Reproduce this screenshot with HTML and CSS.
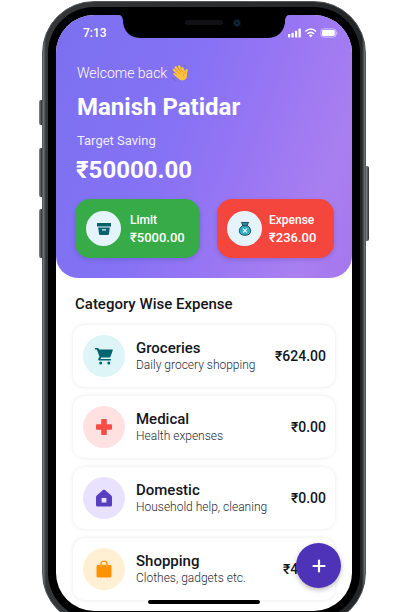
FILE: index.html
```html
<!DOCTYPE html>
<html lang="en">
<head>
<meta charset="utf-8">
<meta name="viewport" content="width=device-width, initial-scale=1">
<title>Expense tracker</title>
<link rel="stylesheet" href="styles.css">
</head>
<body>
<div class="phone">
  <span class="key key-mute"></span>
  <span class="key key-up"></span>
  <span class="key key-down"></span>
  <span class="key key-power"></span>
  <div class="bezel">
  <div class="screen">
    <header class="hero">
      <div class="status">
        <span class="time">7:13</span>
        <svg class="signals" width="50" height="10" viewBox="0 0 50 10" fill="#fff" aria-hidden="true">
          <rect x="0" y="6" width="2.200" height="3.500" rx=".6"/><rect x="3.500" y="4.800" width="2.200" height="4.700" rx=".6"/><rect x="7" y="2.800" width="2.200" height="6.700" rx=".6"/><rect x="10.500" y=".4" width="2.300" height="9.100" rx=".6"/>
          <g fill="none" stroke="#fff" stroke-width="1.500"><path d="M17.300 3.500Q22.700 -1.500 28.100 3.500"/><path d="M19.400 5.800Q22.700 2.900 26 5.800"/></g><path d="M20.800 7.300Q22.700 5.900 24.600 7.300L22.700 9.500Z"/>
          <rect x="32.900" y=".9" width="15" height="8.200" rx="2.600" fill="none" stroke="#fff" stroke-opacity=".7" stroke-width=".8"/><rect x="34" y="2" width="12.800" height="6" rx="1.400"/><path d="M48.700 3.600q1.300 1.400 0 2.800z"/>
        </svg>
      </div>
      <p class="welcome">Welcome back
        <svg width="18" height="18" viewBox="0 0 38 38" aria-hidden="true">
          <g fill="none" stroke="#fbc13d" stroke-linecap="round" stroke-width="5"><path d="M18 23L6 12"/><path d="M20 19L10 7"/><path d="M24 18L17 5"/><path d="M28 19L24 9"/><path d="M30 24L33 13"/></g>
          <path d="M10 17L25 12L33 20Q36 29 29 33Q22 37 16 31L5 22Q4 18 8 19L15 24Z" fill="#fbc13d"/>
          <path d="M10 13l9 8M14 9l8 9M20 9l6 9M31 18q-6 2-5 8" fill="none" stroke="#e08a2e" stroke-width="1.3"/>
          <path d="M2 27q2 6 8 8M26 2q5 1 7 5" fill="none" stroke="#6a67b5" stroke-width="1.5"/>
        </svg>
      </p>
      <h1>Manish Patidar</h1>
      <p class="target">Target Saving</p>
      <p class="saving">₹50000.00</p>
      <div class="totals">
        <section class="total limit">
          <span class="disc"><svg width="16" height="16" viewBox="0 0 16 16" aria-hidden="true"><path d="M1 2h14v3.4H1zM2.2 6.4h11.6l-.8 6.4q-.1 1.2-1.3 1.2H4.3q-1.2 0-1.3-1.2z" fill="#07626c"/><path d="M6 8.8h4" stroke="#e1f5f8" stroke-width="1.3"/></svg></span>
          <div><h2>Limit</h2><p>₹5000.00</p></div>
        </section>
        <section class="total expense">
          <span class="disc"><svg width="14" height="16" viewBox="0 0 16 18" aria-hidden="true"><path d="M3.7 1.5h8.6L11 3.3v2.1H5V3.3z" fill="#278b9d" stroke="#174454"/><path d="M5 5.3Q1.5 7.4 1.5 11q0 5.2 6.5 5.2t6.5-5.2q0-3.6-3.5-5.7z" fill="#35aec4" stroke="#174454"/><path d="M5.8 8.6l4.4 4.4M10.2 8.6L5.8 13" stroke="#e4f7fb" stroke-width="1.3"/></svg></span>
          <div><h2>Expense</h2><p>₹236.00</p></div>
        </section>
      </div>
    </header>
    <main>
      <h2 class="heading">Category Wise Expense</h2>
      <ul class="list">
        <li class="row">
          <span class="icon teal"><svg width="20" height="20" viewBox="0 0 20 20" aria-hidden="true"><path d="M1 2h3.3l.8 1.5h13.2q.8 0 .5.8l-2.2 6.2q-.3 1-1.3 1H7.2l-.8 1.4h10.5v1.7H5.3q-1.8-.2-1-1.8l1.2-2.1L2.8 3.6H1z" fill="#006570"/><circle cx="6.7" cy="17" r="1.5" fill="#006570"/><circle cx="14.8" cy="17" r="1.5" fill="#006570"/></svg></span>
          <div class="about"><h3>Groceries</h3><p>Daily grocery shopping</p></div><strong>₹624.00</strong>
        </li>
        <li class="row">
          <span class="icon red"><svg width="18" height="18" viewBox="0 0 18 18" aria-hidden="true"><path d="M7 1h4q.8 0 .8.8v4.400h4.400q.8 0 .8.8v4q0 .8-.8.8h-4.400v4.400q0 .8-.8.8H7q-.8 0-.8-.8v-4.400H1.800Q1 11.800 1 11V7q0-.8.8-.8h4.400V1.800Q6.200 1 7 1z" fill="#f44d46"/></svg></span>
          <div class="about"><h3>Medical</h3><p>Health expenses</p></div><strong>₹0.00</strong>
        </li>
        <li class="row">
          <span class="icon violet"><svg width="18" height="18" viewBox="0 0 18 18" aria-hidden="true"><path d="M8 1q1-.8 2 0l6 5.200q1 .8 1 2v7.800q0 1.500-1.500 1.500h-13Q1 17.500 1 16V8.200q0-1.200 1-2zM6.600 9v4.600h4.800V9z" fill="#573fc0" fill-rule="evenodd"/></svg></span>
          <div class="about"><h3>Domestic</h3><p>Household help, cleaning</p></div><strong>₹0.00</strong>
        </li>
        <li class="row">
          <span class="icon amber"><svg width="16" height="18" viewBox="0 0 16 18" aria-hidden="true"><path d="M5 6V3.800Q5 1.200 8 1.200t3 2.600V6" fill="none" stroke="#ff9200" stroke-width="1.300"/><rect x=".5" y="4.700" width="15" height="12.800" rx="1.500" fill="#ff9200"/><path d="M5 4.700v2M11 4.700v2" stroke="#ffd08a" stroke-width=".8"/></svg></span>
          <div class="about"><h3>Shopping</h3><p>Clothes, gadgets etc.</p></div><strong>₹45.00</strong>
        </li>
      </ul>
    </main>
    <button class="add" type="button" aria-label="Add expense"><svg width="14" height="14" viewBox="0 0 14 14" aria-hidden="true"><path d="M7 1.500v11M1.500 7h11" stroke="#fff" stroke-width="2.200" stroke-linecap="round"/></svg></button>
    <span class="home"></span>
  </div>
  <svg class="notch" width="170" height="25" viewBox="0 0 170 25" aria-hidden="true">
    <path d="M0 0H170V1Q167 1 166 6V9Q163 24 148 24H22Q7 24 4 9V6Q3 1 0 1Z"/>
    <rect x="66" y="6" width="38" height="5" rx="2.500" fill="#111114"/>
    <circle cx="118" cy="9" r="4" fill="#050d18"/><circle cx="118" cy="9" r="2.300" fill="none" stroke="#12405f"/>
  </svg>
  </div>
</div>
</body>
</html>
```
FILE: styles.css
```css
* { box-sizing: border-box; }
body { margin: 0; height: 100vh; overflow: hidden; background: #fff; color: #15161a; font-family: Roboto, "Noto Sans", sans-serif; }
h1, h2, h3, p, ul { margin: 0; padding: 0; }
svg { display: block; flex: none; }

.phone { position: relative; height: calc(100vh + 12px); margin: 1px 42px 0 42px; padding: 5px; border: 1px solid #55575a; border-radius: 52px; background: linear-gradient(90deg, #77797b 0, #343638 3px, #242527 calc(100% - 3px), #77797b 100%); }
.bezel { position: relative; height: 100%; padding: 8px; border-radius: 46px; background: #000; }
.screen { position: relative; height: 100%; overflow: hidden; border-radius: 38px; background: #fff; }
.notch { position: absolute; top: 7px; left: 50%; transform: translateX(-50%); }
.key { position: absolute; left: -4px; width: 3px; background: linear-gradient(90deg, #8a8b8c, #2a2b2c); border-radius: 2px 0 0 2px; }
.key-mute { top: 98px; height: 25px; }
.key-up { top: 146px; height: 49px; }
.key-down { top: 207px; height: 49px; }
.key-power { left: auto; right: -4px; top: 164px; height: 75px; border-radius: 0 2px 2px 0; }

.hero { padding: 0 18px 20px 19px; border-radius: 0 0 22px 22px; color: #fff; background: linear-gradient(110deg, #7b70f1 0%, #8572f4 40%, #9876f3 62%, #a97ff0 85%, #a577ee 100%); }
.status { display: flex; align-items: center; justify-content: space-between; height: 36px; margin: 0 -4px 0 8px; }
.time { font-size: 12px; font-weight: 500; }
.welcome { display: flex; align-items: center; gap: 4px; padding-left: 2px; margin-top: 12px; font-size: 14px; font-weight: 300; line-height: 20px; }
h1 { padding-left: 2px; margin-top: 8px; font-size: 24px; font-weight: 700; line-height: 32px; }
.target { padding-left: 2px; margin-top: 9px; font-size: 13px; font-weight: 400; line-height: 18px; color: #f0edff; }
.saving { padding-left: 1px; margin-top: 5px; font-size: 24px; font-weight: 700; line-height: 30px; }
.totals { display: grid; grid-template-columns: 125fr 117fr; gap: 17px; margin-top: 14px; }
.total { display: flex; align-items: center; gap: 9px; height: 59px; padding: 0 11px; border-radius: 15px; box-shadow: 0 2px 4px #4035903d; white-space: nowrap; }
.limit { background: #38ab49; }
.expense { gap: 7px; padding: 0 10px; background: #f5463d; }
.disc { display: grid; place-items: center; flex: none; width: 35px; height: 35px; border-radius: 50%; background: #e5f4fb; }
.total h2 { font-size: 12px; font-weight: 500; line-height: 18px; }
.total p { font-size: 13px; font-weight: 500; line-height: 18px; }

main { padding: 16px 17px 0; }
.heading { padding-left: 2px; font-size: 15px; font-weight: 500; line-height: 20px; }
.list { display: grid; gap: 9px; margin-top: 11px; list-style: none; }
.row { display: flex; align-items: center; gap: 11px; height: 62px; padding: 0 9px 0 10px; border-radius: 12px; background: #fff; box-shadow: 0 0 4px #00000018; white-space: nowrap; }
.icon { display: grid; place-items: center; flex: none; width: 42px; height: 42px; border-radius: 50%; }
.teal { background: #def5f8; }
.red { background: #ffe1e1; }
.violet { background: #e9e2ff; }
.amber { background: #fff0d4; }
.about { flex: 1; }
.row h3 { font-size: 15px; font-weight: 500; line-height: 18px; }
.row p { font-size: 12px; font-weight: 300; line-height: 16px; color: #1d2b3a; }
.row strong { font-size: 14px; font-weight: 500; }

.add { position: absolute; right: 11px; bottom: 23px; display: grid; place-items: center; width: 45px; height: 45px; padding: 0; border: 0; border-radius: 50%; background: #4e32b7; box-shadow: 0 2px 5px #00000045; }
.home { position: absolute; left: 50%; bottom: 7px; width: 112px; height: 4px; margin-left: -56px; border-radius: 2px; background: #000; }
```
